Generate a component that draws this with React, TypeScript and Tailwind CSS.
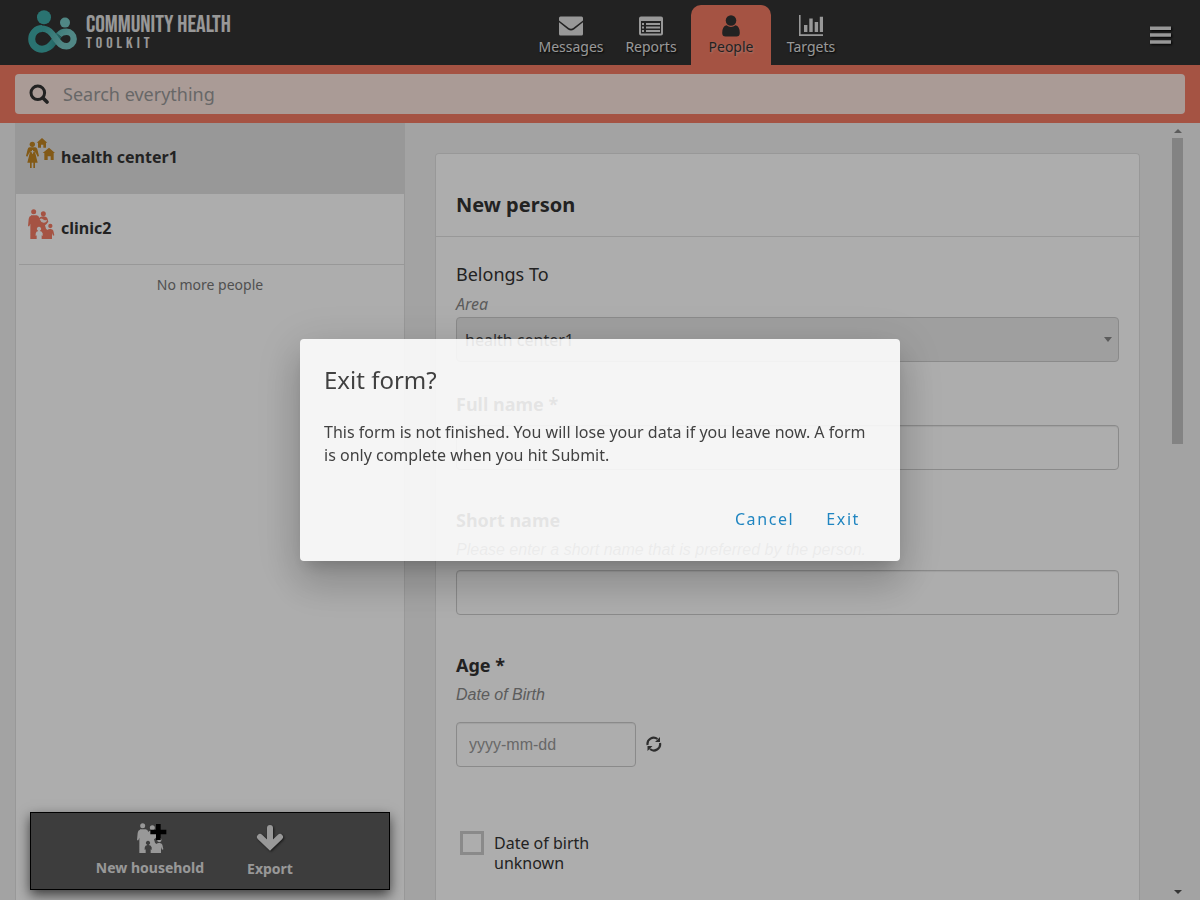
import type { ReactNode } from "react";

function Logo() {
  return (
    <svg viewBox="0 0 50 44" className="h-11 w-[50px] shrink-0" aria-hidden="true">
      <defs>
        <linearGradient id="loop" x1="0" x2="1" y1="0" y2="0">
          <stop offset="0" stopColor="#3faaa7" />
          <stop offset="0.6" stopColor="#3faaa7" />
          <stop offset="1" stopColor="#2f8f8c" />
        </linearGradient>
        <linearGradient id="small-loop" gradientUnits="userSpaceOnUse" x1="16" x2="36" y1="20" y2="34">
          <stop offset="0" stopColor="#3faaa7" />
          <stop offset="1" stopColor="#77c7c4" />
        </linearGradient>
      </defs>
      <circle cx="16" cy="8.2" r="7" fill="#3faaa7" />
      <circle cx="37" cy="13.6" r="5" fill="#77c7c4" />
      <path
        d="M31 26C29 28 28 30 26 32.500C23 36.800 20 40.200 14 40.200A10.300 10.300 0 0 1 14 19.600"
        fill="none"
        stroke="url(#loop)"
        strokeWidth="7"
      />
      <path
        d="M13.900 19.600C21 19.600 24 24.500 27.500 29.500C31 34 33 37.200 38.500 37.200A7.200 7.200 0 0 0 38.500 22.800C35 22.800 32.500 24.200 31 26"
        fill="none"
        stroke="url(#small-loop)"
        strokeWidth="6.4"
      />
    </svg>
  );
}

function EnvelopeIcon() {
  return (
    <svg viewBox="0 0 24 20" className="h-5 w-6" fill="currentColor" aria-hidden="true">
      <path d="M1.5 0.5h21A1.5 1.5 0 0 1 24 2v2.600L14.200 12q-2.200 1.600-4.400 0L0 4.600V2A1.5 1.5 0 0 1 1.5 0.5z" />
      <path d="M0 6.200l9 7.200q3 2 6 0l9-7.200V18a1.5 1.5 0 0 1-1.5 1.5h-21A1.5 1.5 0 0 1 0 18z" />
    </svg>
  );
}

function ListIcon() {
  return (
    <svg viewBox="0 0 24 20" className="h-5 w-6" aria-hidden="true">
      <path
        fill="currentColor"
        fillRule="evenodd"
        d="M2 0.5h20a2 2 0 0 1 2 2v15a2 2 0 0 1-2 2H2a2 2 0 0 1-2-2v-15a2 2 0 0 1 2-2zM2 5v12.5h20V5z"
      />
      <path
        fill="currentColor"
        d="M3 7h2v2H3zM7 7h14v2H7zM3 10.5h2v2H3zM7 10.5h14v2H7zM3 14h2v2H3zM7 14h14v2H7z"
      />
    </svg>
  );
}

function UserIcon() {
  return (
    <svg viewBox="0 0 18 22" className="h-[22px] w-[18px]" fill="currentColor" aria-hidden="true">
      <circle cx="9" cy="5.5" r="5.3" />
      <path d="M4.5 10.3q4.5 3.6 9 0q4.3 1 4.3 7.7q0 3.5-3.3 3.5h-11Q0.200 21.500 0.200 18q0-6.700 4.300-7.700z" />
    </svg>
  );
}

function ChartIcon() {
  return (
    <svg viewBox="0 0 24 21" className="h-[21px] w-6" fill="currentColor" aria-hidden="true">
      <path d="M0 0h1.600v19.200H24V21H0zM5 10h3.400v7H5zM10.300 3.500h3.400V17h-3.400zM15.700 7h3.400v10h-3.400zM20.800 1.800H24V17h-3.200z" />
    </svg>
  );
}

function HealthCenterIcon() {
  return (
    <svg viewBox="78 54 87 90" className="h-[30px] w-[29px] shrink-0 text-[#c18522]" fill="currentColor" aria-hidden="true">
      <circle cx="97" cy="73" r="8" />
      <path d="M89 82h17q4 0 6 6l5 20-4 2-7-14 0 4 7 28h-8v16h-5v-16h-5v16h-5v-16h-8l7-28 0-4-7 14-4-2 5-20q1-6 6-6z" />
      <path d="M110 68l16-14 16 14h-4v15h-8v-9h-7v9h-9V68zM128 99l19-16 18 16h-4v21h-9v-11h-9v11h-10V99z" />
      <path d="M96 90h3v4h4v3h-4v4h-3v-4h-4v-3h4z" fill="#e1e1e1" />
    </svg>
  );
}

function HouseholdIcon({ children }: { children?: ReactNode }) {
  return (
    <svg
      viewBox="84 267 78 90"
      className="block h-[30px] w-[26px] shrink-0 overflow-visible"
      fill="currentColor"
      aria-hidden="true"
    >
      <circle cx="101" cy="275" r="7.500" />
      <circle cx="130" cy="281" r="7.500" />
      <circle cx="151" cy="318" r="6.500" />
      <path
        fillRule="evenodd"
        d="M93 286h17q6 0 8 8l2-2q5-3 10-3 10 0 13 8l2 8-5 7-5 4 3 10 4 4q4-4 10-3 6 0 8 5l3 14-4 1-3-8v18h-31v-11l3 2v-8q-3-7-9-7a6.500 6.500 0 1 0-4 0q-7 0-8 8v7l3-2v11H91v-46l-3 8h-4l2-22q1-9 7-10z"
      />
      {children ?? <path d="M119 298q5-5 10 0 5 5 13 1-3 10-11 9-9-1-12-10z" fill="white" fillOpacity="0.9" />}
    </svg>
  );
}

const tabs = [
  { label: "Messages", icon: <EnvelopeIcon />, active: false },
  { label: "Reports", icon: <ListIcon />, active: false },
  { label: "People", icon: <UserIcon />, active: true },
  { label: "Targets", icon: <ChartIcon />, active: false },
];

function Header() {
  return (
    <header className="flex h-[65px] shrink-0 items-stretch bg-[#333333] text-[#e1e1e1]">
      <a href="#home" className="flex w-[232px] items-start pt-[9px] pl-7">
        <Logo />
        <span className="ml-2 flex flex-col pt-[5px] font-['Bebas_Neue','Oswald','Roboto_Condensed','Liberation_Sans_Narrow','Liberation_Sans',sans-serif] whitespace-nowrap">
          <span className="text-2xl leading-[22px]">COMMUNITY HEALTH</span>
          <span className="text-base leading-4 tracking-[0.25em]">TOOLKIT</span>
        </span>
      </a>
      <nav className="flex flex-1 justify-center pt-[5px]">
        {tabs.map((tab) => (
          <a
            key={tab.label}
            href={"#" + tab.label.toLowerCase()}
            className={
              tab.active
                ? "flex w-20 flex-col items-center rounded-t-[10px] bg-[#f47b63] pt-[9px] text-[#333333] [text-shadow:1px_1px_2px_#ffffff66]"
                : "flex w-20 flex-col items-center pt-[9px] [text-shadow:1px_1px_2px_#000]"
            }
          >
            <span className="flex h-[23px] items-center">{tab.icon}</span>
            <span className="text-sm leading-5">{tab.label}</span>
          </a>
        ))}
      </nav>
      <div className="flex w-[50px] items-center pt-[5px]">
        <button type="button" aria-label="Menu" className="drop-shadow-[1px_1px_1px_#000]">
          <svg viewBox="0 0 21 18" className="h-[18px] w-[21px]" fill="currentColor" aria-hidden="true">
            <path d="M0 0.500h21v3.500H0zM0 7.300h21v3.500H0zM0 14.300h21v3.500H0z" />
          </svg>
        </button>
      </div>
    </header>
  );
}

function SearchBar() {
  return (
    <div className="shrink-0 bg-[#f47b63] px-[15px] py-[9px]">
      <label className="flex h-10 items-center gap-[14px] rounded bg-[#fbe5de] pl-[14px]">
        <svg viewBox="0 0 20 20" className="h-5 w-5" fill="none" stroke="#333333" aria-hidden="true">
          <circle cx="8.800" cy="8.800" r="6.800" strokeWidth="3" />
          <path d="M14 14l4 4" strokeWidth="3.600" strokeLinecap="round" />
        </svg>
        <input
          type="text"
          aria-label="Search everything"
          placeholder="Search everything"
          className="min-w-0 flex-1 bg-transparent text-lg text-[#333333] outline-none placeholder:text-[#999999]"
        />
      </label>
    </div>
  );
}

function PeopleList() {
  return (
    <aside className="flex w-1/3 flex-col border-x border-[#e1e1e1] bg-white">
      <ul>
        <li className="h-[71px] bg-[#e1e1e1]">
          <a href="#health-center1" className="flex h-full gap-[6px] pt-[15px] pl-[10px]">
            <HealthCenterIcon />
            <span className="pt-[7px] font-bold">health center1</span>
          </a>
        </li>
        <li className="ml-[3px] h-[71px] border-b border-[#e1e1e1]">
          <a href="#clinic2" className="flex h-full gap-[7px] pt-[15px] pl-[9px]">
            <span className="text-[#f47b63]">
              <HouseholdIcon />
            </span>
            <span className="pt-[7px] font-bold">clinic2</span>
          </a>
        </li>
      </ul>
      <p className="pt-[10px] text-center text-sm leading-5 text-[#777777]">No more people</p>
      <div className="mx-[14px] mt-auto mb-[10px] flex h-[78px] justify-center border border-black bg-[#5a5a5a] text-sm font-bold text-[#e1e1e1] shadow-[0_5px_12px_rgba(0,0,0,0.65)] [text-shadow:1px_1px_2px_#222]">
        <button type="button" className="flex w-[120px] flex-col items-center pt-[10px]">
          <HouseholdIcon>
            <path d="M141 270h14v17h17v14h-17v17h-14v-17h-17v-14h17z" fill="black" />
          </HouseholdIcon>
          <span className="mt-1 leading-[22px]">New household</span>
        </button>
        <button type="button" className="flex w-[120px] flex-col items-center pt-[10px]">
          <svg
            viewBox="0 0 28 30"
            className="h-[30px] w-7 drop-shadow-[1px_1px_1px_#222]"
            fill="none"
            stroke="currentColor"
            strokeWidth="6"
            strokeLinecap="round"
            aria-hidden="true"
          >
            <path d="M14 5v17" />
            <path d="M4 14l10 9.500L24 14" />
          </svg>
          <span className="mt-1 leading-6">Export</span>
        </button>
      </div>
    </aside>
  );
}

const field = "h-[45px] w-full rounded border border-[#cccccc] bg-white px-3 text-base shadow-[inset_0_1px_1px_rgba(0,0,0,0.075)]";
const hint = "text-base leading-6 text-[#888888] italic font-['Liberation_Sans',Arial,sans-serif]";

function PersonForm() {
  return (
    <form className="mx-[30px] mt-[30px] min-w-0 flex-1 self-stretch overflow-hidden rounded-t border border-b-0 border-[#e1e1e1] bg-white">
      <h1 className="border-b border-[#e1e1e1] px-5 pt-9 pb-4 text-xl leading-[30px] font-bold">New person</h1>
      <div className="px-5 pt-[23px]">
        <label htmlFor="area" className="block text-lg leading-7">
          Belongs To
        </label>
        <p className="pt-1 text-base leading-6 text-[#888888] italic">Area</p>
        <div className="relative">
          <select
            id="area"
            className="mt-px block h-[45px] w-full appearance-none rounded border border-[#cccccc] bg-[#ebebeb] px-2 text-base text-[#444444]"
          >
            <option>health center1</option>
          </select>
          <svg viewBox="0 0 8 5" className="absolute top-5 right-[7px] h-[5px] w-2" fill="#888888" aria-hidden="true">
            <path d="M0 0h8L4 5z" />
          </svg>
        </div>
        <label htmlFor="full-name" className="mt-7 mb-[7px] block text-lg leading-7 font-bold">
          Full name *
        </label>
        <input id="full-name" type="text" className={field} />
        <label htmlFor="short-name" className="mt-9 block text-lg leading-7 font-bold">
          Short name
        </label>
        <p className={hint + " mt-1 mb-2"}>Please enter a short name that is preferred by the person.</p>
        <input id="short-name" type="text" className={field} />
        <label htmlFor="birth-date" className="mt-9 block text-lg leading-7 font-bold">
          Age *
        </label>
        <p className={hint + " mt-1 mb-[15px]"}>Date of Birth</p>
        <div className="flex items-center gap-[10px]">
          <div className="w-[180px]">
            <input
              id="birth-date"
              type="text"
              placeholder="yyyy-mm-dd"
              className={field + " font-['Liberation_Sans',Arial,sans-serif] placeholder:text-[#999999]"}
            />
          </div>
          <button type="button" aria-label="Reset date" className="pb-[2px]">
            <svg viewBox="0 0 16 16" className="h-4 w-4" fill="none" stroke="#444444" strokeWidth="2.200" aria-hidden="true">
              <path d="M1.600 9A6.200 6.200 0 0 1 11.500 3M14 7A6.200 6.200 0 0 1 4 13" />
              <path d="M14 1v5h-5zM1.500 15v-5h5z" fill="#444444" stroke="none" />
            </svg>
          </button>
        </div>
        <label className="mt-16 ml-1 flex w-40 items-start gap-[10px] text-base leading-5">
          <input type="checkbox" className="h-6 w-6 shrink-0 appearance-none border-[3px] border-[#cccccc]" />
          <span className="pt-[2px]">Date of birth unknown</span>
        </label>
      </div>
    </form>
  );
}

function ScrollTrack() {
  return (
    <div className="flex w-[15px] shrink-0 flex-col items-center pt-[6px] pb-[6px]" aria-hidden="true">
      <svg viewBox="0 0 8 4" className="h-1 w-2" fill="#888888">
        <path d="M4 0l4 4H0z" />
      </svg>
      <div className="mt-[5px] h-2/5 w-[11px] bg-[#c1c1c1]" />
      <svg viewBox="0 0 8 4" className="mt-auto h-1 w-2" fill="#505050">
        <path d="M0 0h8L4 4z" />
      </svg>
    </div>
  );
}

function ExitDialog() {
  return (
    <div className="fixed inset-0 flex items-center justify-center bg-black/32">
      <div
        role="dialog"
        aria-modal="true"
        aria-labelledby="exit-title"
        className="w-[600px] max-w-[90vw] rounded bg-white p-6 text-[#333333] opacity-88 shadow-[0_11px_15px_-7px_rgba(0,0,0,0.2),0_24px_38px_3px_rgba(0,0,0,0.14),0_9px_46px_8px_rgba(0,0,0,0.12)]"
      >
        <h2 id="exit-title" className="text-2xl leading-[34px]">
          Exit form?
        </h2>
        <p className="mt-6 text-base leading-[23px]">
          This form is not finished. You will lose your data if you leave now. A form is only complete when you hit
          Submit.
        </p>
        <div className="mt-[34px] flex h-9 justify-end text-base tracking-widest text-[#0d80c4]">
          <button type="button" className="px-4">
            Cancel
          </button>
          <button type="button" className="px-4">
            Exit
          </button>
        </div>
      </div>
    </div>
  );
}

export default function App() {
  return (
    <div className="flex h-screen flex-col overflow-hidden bg-[#f1f1f1] font-['Noto_Sans',sans-serif] text-[#333333]">
      <Header />
      <SearchBar />
      <main className="flex min-h-0 flex-1 px-[15px]">
        <PeopleList />
        <section className="flex min-w-0 flex-1">
          <PersonForm />
          <ScrollTrack />
        </section>
      </main>
      <ExitDialog />
    </div>
  );
}
